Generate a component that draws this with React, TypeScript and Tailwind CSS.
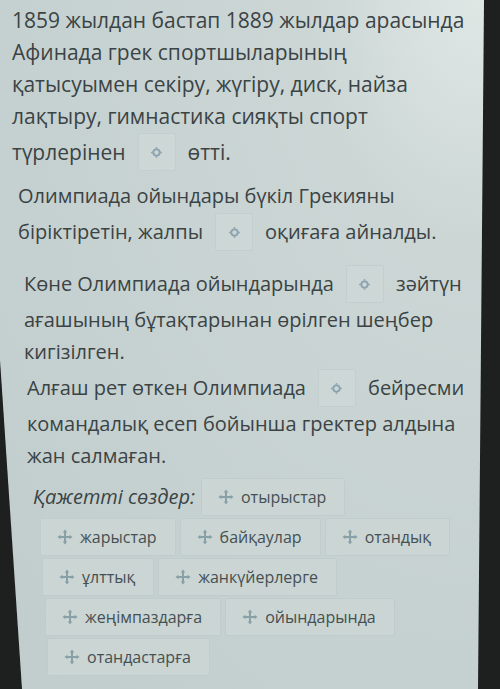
// Сөздерді сүйреп орналастыру жаттығуы
// Мәтін ішіндегі бос орындар + төменде қажетті сөздер тізімі

const font = "font-['Open_Sans','Noto_Sans',sans-serif]";

// бос орынның белгісі (сақина + төрт нұсқар)
function SlotIcon() {
  return (
    <svg width="13" height="13" viewBox="0 0 14 14" fill="none">
      <circle cx="7" cy="7" r="3.4" stroke="#8ba2af" strokeWidth="1.9" />
      <path d="M7 0.8 L8.6 2.8 L5.4 2.8 Z M7 13.2 L8.6 11.2 L5.4 11.2 Z M0.8 7 L2.8 5.4 L2.8 8.6 Z M13.2 7 L11.2 5.4 L11.2 8.6 Z" fill="#8ba2af" />
    </svg>
  );
}

// сүйреу белгісі (төрт жақты көрсеткі)
function MoveIcon() {
  return (
    <svg width="16" height="16" viewBox="0 0 16 16" fill="none">
      <path d="M8 2 V14 M2 8 H14" stroke="#88a1a7" strokeWidth="2" />
      <path d="M8 0.5 L10.3 3.4 H5.7 Z M8 15.5 L10.3 12.6 H5.7 Z M0.5 8 L3.4 5.7 V10.3 Z M15.5 8 L12.6 5.7 V10.3 Z" fill="#88a1a7" />
    </svg>
  );
}

function Slot() {
  return (
    <span className="inline-flex items-center justify-center w-[38px] h-[38px] mx-3 bg-[#ccd7d6] border border-[#c3cfce] rounded-[2px]">
      <SlotIcon />
    </span>
  );
}

function Chip({ word }: { word: string }) {
  return (
    <div className="flex items-center gap-[7px] h-[38px] pl-[16px] pr-[18px] bg-[#cad5d4] border border-[#c0cccb] rounded-[2px] text-[16px] text-[#465052] whitespace-nowrap">
      <MoveIcon />
      <span>{word}</span>
    </div>
  );
}

// бір жол мәтін
function Line({ children, tall }: { children: React.ReactNode; tall?: boolean }) {
  return (
    <div className={`flex items-center whitespace-nowrap ${tall ? "h-10" : "h-8"}`}>
      {children}
    </div>
  );
}

export default function App() {
  return (
    <div className={`w-[500px] h-[689px] bg-[#1e1f1f] overflow-hidden ${font}`}>
      <div className="w-full h-full [clip-path:polygon(0_0,484px_0,478px_100%,22px_100%,0_360px)] bg-[radial-gradient(ellipse_at_95%_0%,#dfe7e5_0%,#cbd6d5_25%,#c5d1d0_70%,#c1cdcc_100%)] text-[20px] text-[#3b4345] leading-8 pt-1 flex flex-col">
        {/* 1-сұрақ */}
        <div className="pl-3 text-[21px]">
          <Line>1859 жылдан бастап 1889 жылдар арасында</Line>
          <Line>Афинада грек спортшыларының</Line>
          <Line>қатысуымен секіру, жүгіру, диск, найза</Line>
          <Line>лақтыру, гимнастика сияқты спорт</Line>
          <Line tall>
            түрлерінен <Slot /> өтті.
          </Line>
        </div>

        {/* 2-сұрақ */}
        <div className="pl-[18px] mt-2">
          <Line>Олимпиада ойындары бүкіл Грекияны</Line>
          <Line tall>
            біріктіретін, жалпы <Slot /> оқиғаға айналды.
          </Line>
        </div>

        {/* 3-сұрақ */}
        <div className="pl-6 mt-3">
          <Line tall>
            Көне Олимпиада ойындарында <Slot /> зәйтүн
          </Line>
          <Line>ағашының бұтақтарынан өрілген шеңбер</Line>
          <Line>кигізілген.</Line>
        </div>

        {/* 4-сұрақ */}
        <div className="pl-[27px] mt-0">
          <Line tall>
            Алғаш рет өткен Олимпиада <Slot /> бейресми
          </Line>
          <Line>командалық есеп бойынша гректер алдына</Line>
          <Line>жан салмаған.</Line>
        </div>

        {/* сөздер тізімі */}
        <div className="pl-[33px] mt-[6px] flex flex-col gap-[2px]">
          <div className="flex items-center gap-[6px]">
            <span className="italic">Қажетті сөздер:</span>
            <Chip word="отырыстар" />
          </div>
          <div className="flex gap-[4px] pl-[7px]">
            <Chip word="жарыстар" />
            <Chip word="байқаулар" />
            <Chip word="отандық" />
          </div>
          <div className="flex gap-[4px] pl-[9px]">
            <Chip word="ұлттық" />
            <Chip word="жанкүйерлерге" />
          </div>
          <div className="flex gap-[4px] pl-[12px]">
            <Chip word="жеңімпаздарға" />
            <Chip word="ойындарында" />
          </div>
          <div className="flex gap-[4px] pl-[14px]">
            <Chip word="отандастарға" />
          </div>
        </div>
      </div>
    </div>
  );
}
